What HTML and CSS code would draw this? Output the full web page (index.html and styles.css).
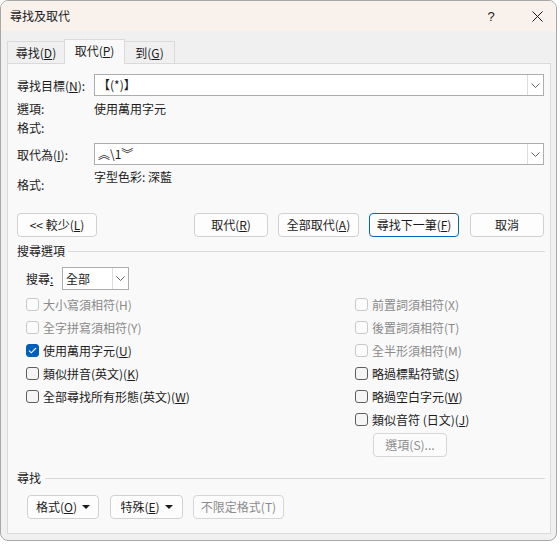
FILE: index.html
```html
<!DOCTYPE html>
<html lang="zh-Hant">
<head>
<meta charset="utf-8">
<title>尋找及取代</title>
<link rel="stylesheet" href="styles.css">
</head>
<body>
<div class="window">
  <header class="titlebar">
    <span class="title">尋找及取代</span>
    <span class="help">?</span>
    <span class="close">
      <svg width="11" height="11" viewBox="0 0 11 11"><path d="M0.5 0.5L10.5 10.5M10.5 0.5L0.5 10.5" stroke="#1a1a1a" stroke-width="1" fill="none"/></svg>
    </span>
  </header>

  <div class="content">
    <nav class="tabs">
      <div class="tab tab-find">尋找(<u>D</u>)</div>
      <div class="tab tab-replace active">取代(<u>P</u>)</div>
      <div class="tab tab-goto">到(<u>G</u>)</div>
    </nav>

    <section class="panel">
      <div class="field-row">
        <span class="lbl">尋找目標(<u>N</u>):</span>
        <div class="combo">
          <span class="val">【(*)】</span>
          <span class="drop"><svg width="9" height="5" viewBox="0 0 9 5"><path d="M0.5 0.5L4.5 4.5L8.5 0.5" stroke="#5f5f5f" fill="none"/></svg></span>
        </div>
      </div>
      <div class="info-row">
        <span class="lbl">選項:</span>
        <span class="info">使用萬用字元</span>
      </div>
      <div class="info-row">
        <span class="lbl">格式:</span>
        <span class="info"></span>
      </div>

      <div class="field-row replace-row">
        <span class="lbl">取代為(<u>I</u>):</span>
        <div class="combo">
          <span class="val">︽\1︾</span>
          <span class="drop"><svg width="9" height="5" viewBox="0 0 9 5"><path d="M0.5 0.5L4.5 4.5L8.5 0.5" stroke="#5f5f5f" fill="none"/></svg></span>
        </div>
      </div>
      <div class="format-row">
        <span class="lbl">格式:</span>
        <span class="info">字型色彩: 深藍</span>
      </div>

      <div class="action-row">
        <button class="btn btn-less">&lt;&lt; 較少(<u>L</u>)</button>
        <button class="btn btn-replace">取代(<u>R</u>)</button>
        <button class="btn btn-all">全部取代(<u>A</u>)</button>
        <button class="btn btn-next primary">尋找下一筆(<u>F</u>)</button>
        <button class="btn btn-cancel">取消</button>
      </div>

      <div class="group-head">
        <span>搜尋選項</span>
        <span class="rule"></span>
      </div>

      <div class="search-row">
        <span class="search-lbl">搜尋<u>:</u></span>
        <div class="select">
          <span class="val">全部</span>
          <span class="drop"><svg width="9" height="5" viewBox="0 0 9 5"><path d="M0.5 0.5L4.5 4.5L8.5 0.5" stroke="#5f5f5f" fill="none"/></svg></span>
        </div>
      </div>

      <div class="options">
        <div class="opt-col left">
          <label class="check disabled"><span class="box"></span>大小寫須相符(H)</label>
          <label class="check disabled"><span class="box"></span>全字拼寫須相符(Y)</label>
          <label class="check"><span class="box checked"><svg width="9" height="7" viewBox="0 0 9 7"><path d="M1 3.6L3.3 5.8L8 1" stroke="#fff" stroke-width="1.1" fill="none"/></svg></span>使用萬用字元(<u>U</u>)</label>
          <label class="check"><span class="box"></span>類似拼音(英文)(<u>K</u>)</label>
          <label class="check"><span class="box"></span>全部尋找所有形態(英文)(<u>W</u>)</label>
        </div>
        <div class="opt-col right">
          <label class="check disabled"><span class="box"></span>前置詞須相符(X)</label>
          <label class="check disabled"><span class="box"></span>後置詞須相符(T)</label>
          <label class="check disabled"><span class="box"></span>全半形須相符(M)</label>
          <label class="check"><span class="box"></span>略過標點符號(<u>S</u>)</label>
          <label class="check"><span class="box"></span>略過空白字元(<u>W</u>)</label>
          <label class="check"><span class="box"></span>類似音符 (日文)(<u>J</u>)</label>
          <button class="btn btn-opts" disabled>選項(S)...</button>
        </div>
      </div>

      <div class="bottom">
        <div class="group-head find-head">
          <span>尋找</span>
          <span class="rule"></span>
        </div>
        <div class="bottom-row">
          <button class="btn btn-format">格式(<u>O</u>)<svg class="tri" width="8" height="4" viewBox="0 0 8 4"><path d="M0 0H8L4 4Z" fill="#1a1a1a"/></svg></button>
          <button class="btn btn-special">特殊(<u>E</u>)<svg class="tri" width="8" height="4" viewBox="0 0 8 4"><path d="M0 0H8L4 4Z" fill="#1a1a1a"/></svg></button>
          <button class="btn btn-noformat" disabled>不限定格式(T)</button>
        </div>
      </div>
    </section>
  </div>
</div>
</body>
</html>
```
FILE: styles.css
```css
* { box-sizing: border-box; }

html, body { margin: 0; padding: 0; }

body {
  background: #ffffff;
  font-family: "Noto Sans CJK TC", "Noto Sans", sans-serif;
  font-size: 12px;
  color: #1b1b1b;
}

u { text-decoration: underline; text-underline-offset: 1px; }

/* dialog frame */
.window {
  width: 557px;
  height: 541px;
  border: 1px solid #a8a8a8;
  border-radius: 8px;
  background: #f0f0f0;
  overflow: hidden;
  display: flex;
  flex-direction: column;
}

.titlebar {
  height: 30px;
  flex: none;
  background: #f9f1ec;
  display: flex;
  align-items: center;
  padding-left: 9px;
  padding-right: 9px;
}
.title { line-height: 16px; }
.help {
  margin-left: auto;
  width: 20px;
  text-align: center;
  font-family: "Liberation Sans", sans-serif;
  font-size: 13px;
}
.close {
  width: 20px;
  margin-left: 26px;
  display: flex;
  justify-content: center;
}

.content {
  flex: 1;
  display: flex;
  flex-direction: column;
  padding: 8px 5px 6px 6px;
}

/* tab strip */
.tabs {
  height: 25px;
  flex: none;
  display: flex;
  align-items: flex-end;
}
.tab {
  height: 22px;
  margin-bottom: 1px;
  border: 1px solid #dadada;
  border-bottom: none;
  background: #f0f0f0;
  display: flex;
  align-items: center;
  justify-content: center;
  line-height: 16px;
  padding-top: 1px;
}
.tab-find { width: 58px; }
.tab-replace { width: 61px; margin-left: -1px; }
.tab-goto { width: 51px; margin-left: -1px; }
.tab.active {
  height: 25px;
  margin-bottom: 0;
  background: #f9f9f9;
  position: relative;
  z-index: 1;
  padding-top: 0;
  padding-bottom: 3px;
}

.panel {
  flex: 1;
  margin-top: -1px;
  border: 1px solid #dadada;
  background: #f9f9f9;
  padding: 10px 6px 14px 9px;
  display: flex;
  flex-direction: column;
}

/* find / replace fields */
.field-row, .info-row, .format-row {
  display: grid;
  grid-template-columns: 77px 1fr;
}
.field-row { height: 22px; align-items: center; }
.info-row { height: 19px; line-height: 19px; margin-top: 3px; }
.info-row + .info-row { margin-top: 0; }
.replace-row { margin-top: 6px; }
.format-row { height: 29px; }
.format-row .lbl { align-self: end; line-height: 19px; }
.format-row .info { align-self: start; line-height: 19px; margin-top: 2px; }

.combo, .select {
  height: 22px;
  border: 1px solid #adadad;
  background: #ffffff;
  display: flex;
  align-items: center;
}
.combo .val { flex: 1; padding-left: 3px; line-height: 18px; }
.drop {
  width: 16px;
  height: 20px;
  border-left: 1px solid #dcdcdc;
  display: flex;
  align-items: center;
  justify-content: center;
  background: #fff;
}

/* buttons */
.btn {
  height: 24px;
  border: 1px solid #d1d1d1;
  border-radius: 4px;
  background: #fdfdfd;
  font: inherit;
  color: #1b1b1b;
  padding: 0;
  display: flex;
  align-items: center;
  justify-content: center;
  line-height: 16px;
}
.btn:disabled { color: #8c8c8c; border-color: #d6d6d6; background: #fbfbfb; }
.btn.primary { border-color: #0067c0; }

.action-row {
  display: flex;
  margin-top: 19px;
  gap: 10px;
}
.btn-less { width: 80px; margin-right: auto; }
.btn-replace { width: 74px; }
.btn-all { width: 81px; }
.btn-next { width: 90px; }
.btn-cancel { width: 74px; margin-left: 1px; }

/* group heading with trailing rule */
.group-head {
  height: 18px;
  margin-top: 5px;
  display: flex;
  align-items: center;
  gap: 3px;
  line-height: 18px;
}
.rule { flex: 1; height: 1px; background: #d9d9d9; margin-right: -1px; }

.search-row {
  margin-top: 7px;
  padding-left: 9px;
  display: flex;
  align-items: center;
}
.search-lbl { width: 36px; }
.select { width: 67px; height: 23px; }
.select .val { flex: 1; padding-left: 3px; }
.select .drop { height: 21px; }

/* option checkboxes */
.options {
  margin-top: 3px;
  display: grid;
  grid-template-columns: 329px 1fr;
  padding-left: 9px;
}
.opt-col { display: flex; flex-direction: column; }
.check {
  height: 23px;
  display: flex;
  align-items: center;
  line-height: 16px;
}
.check.disabled { color: #8a8a8a; }
.box {
  width: 13px;
  height: 13px;
  margin-right: 4px;
  border: 1px solid #5e5e5e;
  border-radius: 3px;
  background: #f5f5f5;
  display: flex;
  align-items: center;
  justify-content: center;
}
.check.disabled .box { border-color: #c9c9c9; background: #fbfbfb; }
.box.checked { background: #005fb8; border-color: #005fb8; }

.btn-opts { width: 74px; margin-left: 18px; margin-top: 2px; }

/* bottom find group */
.bottom { margin-top: auto; }
.find-head { margin-top: 0; gap: 4px; }
.bottom-row {
  margin-top: 8px;
  padding-left: 10px;
  display: flex;
  gap: 11px;
}
.btn-format { width: 72px; }
.btn-special { width: 73px; }
.btn-noformat { width: 91px; margin-left: -1px; }
.tri { margin-left: 5px; }
```
